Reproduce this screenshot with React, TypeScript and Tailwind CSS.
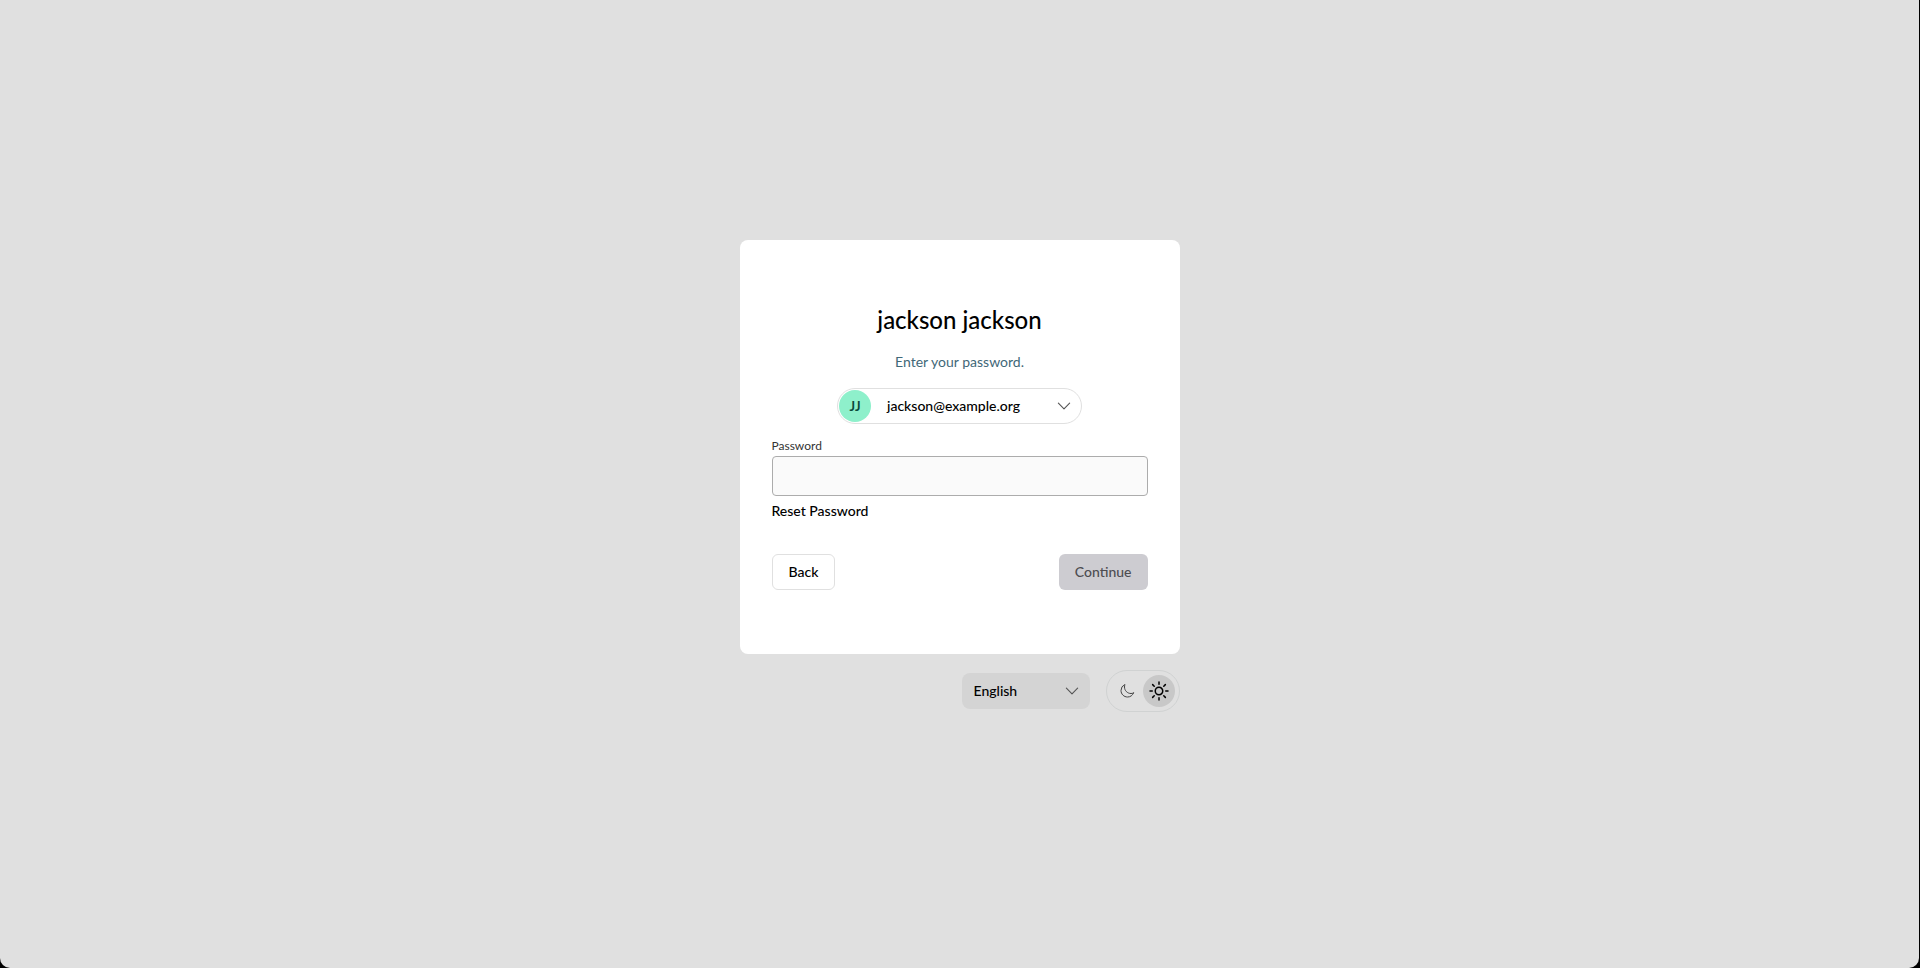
"use client";

import React, { useState } from "react";
import { HiOutlineChevronDown, HiOutlineMoon, HiOutlineSun } from "react-icons/hi2";

type Theme = "dark" | "light";

const languages = ["English", "Deutsch", "Italiano", "Español"];

const ThemeSwitch: React.FC = () => {
    const [theme, setTheme] = useState<Theme>("light");

    const getButtonClass = (value: Theme) =>
        theme === value
            ? "flex h-8 w-8 items-center justify-center rounded-full bg-[#c8c8c8] text-black"
            : "flex h-8 w-8 items-center justify-center rounded-full text-[#444444]";

    return (
        <div className="flex rounded-full border border-[#d0d2d2] p-1">
            <button
                type="button"
                aria-label="Dark theme"
                onClick={() => setTheme("dark")}
                className={getButtonClass("dark")}
            >
                <HiOutlineMoon className="h-4 w-4" />
            </button>
            <button
                type="button"
                aria-label="Light theme"
                onClick={() => setTheme("light")}
                className={getButtonClass("light")}
            >
                <HiOutlineSun className="h-6 w-6" />
            </button>
        </div>
    );
};

const App: React.FC = () => {
    const [password, setPassword] = useState("");
    const [language, setLanguage] = useState("English");

    return (
        <div className="min-h-screen flex bg-black pr-px font-['Lato',sans-serif]">
            <main className="flex flex-1 flex-col items-center justify-center rounded-b-[10px] bg-[#e0e0e0] px-4">
                <div className="w-full max-w-[440px]">
                    <form
                        onSubmit={(e) => e.preventDefault()}
                        className="flex flex-col rounded-lg bg-white px-8 py-16"
                    >
                        <h1 className="text-center text-2xl font-medium text-black">jackson jackson</h1>
                        <p className="mt-4 text-center text-sm text-[#3f6878]">Enter your password.</p>

                        {/* Account picker */}
                        <button
                            type="button"
                            className="mt-4 flex h-9 w-[245px] items-center self-center rounded-full border border-[#e0e0e0] pl-px pr-2 text-sm font-medium text-black"
                        >
                            <span className="flex h-8 w-8 items-center justify-center rounded-full bg-[#8ef0cb] text-[13px] font-bold text-[#0b4a3c]">
                                JJ
                            </span>
                            <span className="ml-4 flex-1 text-left">jackson@example.org</span>
                            <HiOutlineChevronDown className="h-[18px] w-[18px] text-[#555555]" />
                        </button>

                        <label htmlFor="password" className="mt-3.5 text-xs text-[#333333]">
                            Password
                        </label>
                        <input
                            id="password"
                            type="password"
                            value={password}
                            onChange={(e) => setPassword(e.target.value)}
                            className="mt-0.5 h-10 w-full rounded border border-[#acacac] bg-[#fafafa] px-2 text-sm focus:outline-none focus:border-black"
                        />
                        <a href="#reset" className="mt-[5px] self-start text-sm font-medium text-black">
                            Reset Password
                        </a>

                        <div className="mt-[33px] flex items-center justify-between">
                            <button
                                type="button"
                                className="h-9 rounded-md border border-[#e0e0e0] px-4 text-sm font-medium text-black"
                            >
                                Back
                            </button>
                            <button
                                type="submit"
                                disabled={!password}
                                className="h-9 rounded-md bg-[#cdccd1] px-4 text-sm font-medium text-[#4e4d52]"
                            >
                                Continue
                            </button>
                        </div>
                    </form>

                    <div className="flex items-center justify-end gap-4 py-4">
                        <div className="relative">
                            <select
                                aria-label="Language"
                                value={language}
                                onChange={(e) => setLanguage(e.target.value)}
                                className="h-9 w-32 appearance-none rounded-lg bg-[#d4d4d4] px-3 text-sm font-medium text-black"
                            >
                                {languages.map((item) => (
                                    <option key={item}>{item}</option>
                                ))}
                            </select>
                            <HiOutlineChevronDown className="pointer-events-none absolute right-[9px] top-[9px] h-[18px] w-[18px] text-[#555555]" />
                        </div>
                        <ThemeSwitch />
                    </div>
                </div>
            </main>
        </div>
    );
};

export default App;
